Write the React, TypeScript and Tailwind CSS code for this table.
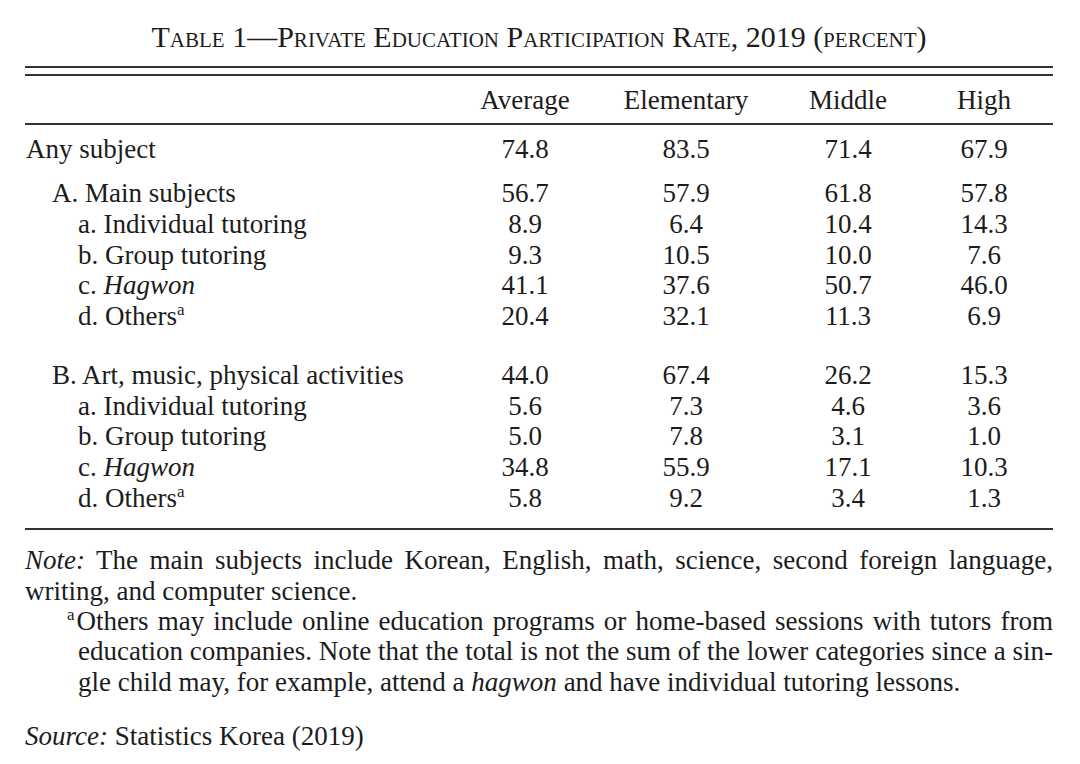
import React from "react";

interface Row {
  label: React.ReactNode;
  indent: number;
  values: string[];
}

const Sup = () => (
  <span className="relative -top-[10px] text-[17px] leading-none">a</span>
);

const sectionA: Row[] = [
  { label: "A. Main subjects", indent: 1, values: ["56.7", "57.9", "61.8", "57.8"] },
  { label: "a. Individual tutoring", indent: 2, values: ["8.9", "6.4", "10.4", "14.3"] },
  { label: "b. Group tutoring", indent: 2, values: ["9.3", "10.5", "10.0", "7.6"] },
  { label: <>c. <i>Hagwon</i></>, indent: 2, values: ["41.1", "37.6", "50.7", "46.0"] },
  { label: <>d. Others<Sup /></>, indent: 2, values: ["20.4", "32.1", "11.3", "6.9"] },
];

const sectionB: Row[] = [
  { label: "B. Art, music, physical activities", indent: 1, values: ["44.0", "67.4", "26.2", "15.3"] },
  { label: "a. Individual tutoring", indent: 2, values: ["5.6", "7.3", "4.6", "3.6"] },
  { label: "b. Group tutoring", indent: 2, values: ["5.0", "7.8", "3.1", "1.0"] },
  { label: <>c. <i>Hagwon</i></>, indent: 2, values: ["34.8", "55.9", "17.1", "10.3"] },
  { label: <>d. Others<Sup /></>, indent: 2, values: ["5.8", "9.2", "3.4", "1.3"] },
];

const cols = "grid grid-cols-[427px_146px_176px_148px_124px]";

function TableRow({ row }: { row: Row }) {
  return (
    <div className={cols + " h-[30.7px] leading-[30.7px]"}>
      <div className={row.indent === 0 ? "pl-[1px]" : row.indent === 1 ? "pl-[27px]" : "pl-[53px]"}>{row.label}</div>
      {row.values.map((v, i) => (
        <div key={i} className="text-center">{v}</div>
      ))}
    </div>
  );
}

export default function App() {
  return (
    <div className="w-[1080px] h-[764px] bg-white text-[#1c1c1c] px-[25px] pr-[27px] font-['Liberation_Serif',serif] text-[27px]">
      <div className="pt-[22px] h-[66px] text-center text-[30px] leading-[30px] [font-variant:small-caps]">
        Table 1—Private Education Participation Rate, 2019 (percent)
      </div>
      <div className="h-[2px] bg-[#333]" />
      <div className="h-[6px]" />
      <div className="h-[2px] bg-[#333]" />

      <div className={cols + " mt-[9px] h-[30.7px] leading-[30.7px]"}>
        <div />
        <div className="text-center">Average</div>
        <div className="text-center">Elementary</div>
        <div className="text-center">Middle</div>
        <div className="text-center">High</div>
      </div>
      <div className="mt-[7px] h-[2px] bg-[#333]" />

      <div className="mt-[9px]">
        <TableRow row={{ label: "Any subject", indent: 0, values: ["74.8", "83.5", "71.4", "67.9"] }} />
      </div>
      <div className="mt-[14px]">
        {sectionA.map((r, i) => (
          <TableRow key={i} row={r} />
        ))}
      </div>
      <div className="mt-[28px]">
        {sectionB.map((r, i) => (
          <TableRow key={i} row={r} />
        ))}
      </div>
      <div className="mt-[15px] h-[2px] bg-[#333]" />

      <div className="mt-[15px] leading-[30.4px]">
        <div className="text-justify [text-align-last:justify] whitespace-nowrap">
          <i>Note:</i> The main subjects include Korean, English, math, science, second foreign language,
        </div>
        <div>writing, and computer science.</div>
        <div className="pl-[53px]">
          <div className="-ml-[11px] text-justify [text-align-last:justify] whitespace-nowrap">
            <span className="relative -top-[10px] text-[17px] leading-none mr-[2px]">a</span>Others may include online education programs or home-based sessions with tutors from
          </div>
          <div className="text-justify [text-align-last:justify] whitespace-nowrap">
            education companies. Note that the total is not the sum of the lower categories since a sin-
          </div>
          <div>
            gle child may, for example, attend a <i>hagwon</i> and have individual tutoring lessons.
          </div>
        </div>
      </div>

      <div className="mt-[24px] leading-[30.6px]">
        <i>Source:</i> Statistics Korea (2019)
      </div>
    </div>
  );
}
